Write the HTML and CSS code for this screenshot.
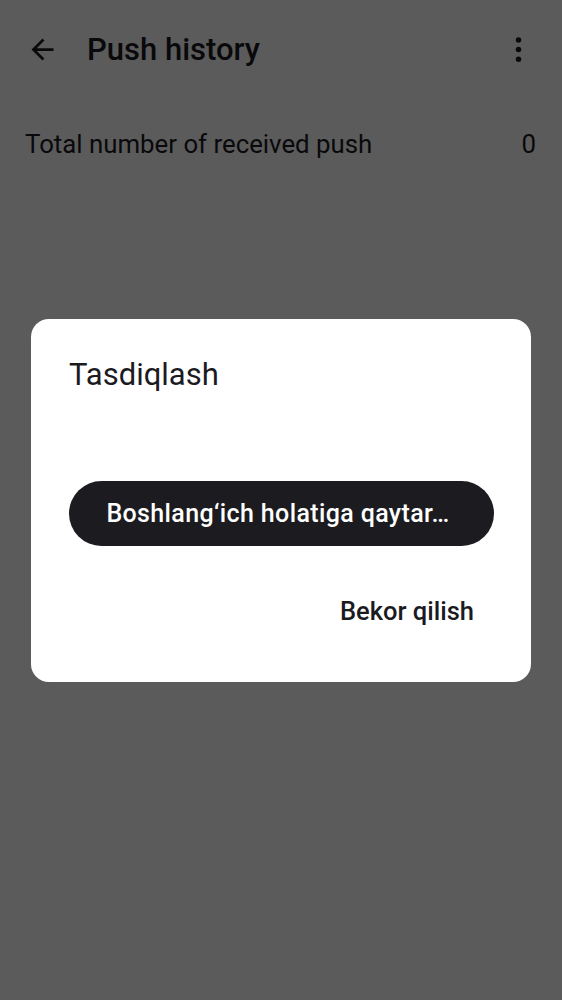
FILE: index.html
```html
<!DOCTYPE html>
<html>
<head>
<meta charset="utf-8">
<link rel="stylesheet" href="styles.css">
</head>
<body>
<div class="app">
  <header class="toolbar">
    <span class="nav-icon">
      <svg width="33" height="33" viewBox="0 0 24 24"><path d="M20 11H7.83l5.59-5.59L12 4l-8 8 8 8 1.41-1.41L7.83 13H20v-2z" fill="currentColor"/></svg>
    </span>
    <h1 class="title">Push history</h1>
    <span class="menu-icon">
      <svg width="33" height="33" viewBox="0 0 24 24"><circle cx="12" cy="5" r="2" fill="currentColor"/><circle cx="12" cy="12" r="2" fill="currentColor"/><circle cx="12" cy="19" r="2" fill="currentColor"/></svg>
    </span>
  </header>
  <div class="row">
    <span class="row-label">Total number of received push</span>
    <span class="row-value">0</span>
  </div>
</div>
<div class="scrim">
  <div class="dialog">
    <h2 class="dialog-title">Tasdiqlash</h2>
    <button class="primary-btn"><span class="btn-label">Boshlang‘ich holatiga qaytar…</span></button>
    <div class="actions">
      <button class="text-btn">Bekor qilish</button>
    </div>
  </div>
</div>
</body>
</html>
```

FILE: styles.css
```css
* { box-sizing: border-box; }
html, body { margin: 0; padding: 0; }
body {
  width: 562px;
  height: 1000px;
  background: #fcfcfc;
  font-family: Roboto, "Noto Sans", sans-serif;
  color: #1b1b1f;
  overflow: hidden;
}
.app { height: 1000px; }
.toolbar {
  display: flex;
  align-items: center;
  height: 98px;
  padding: 0 27px 0 26px;
}
.nav-icon { display: flex; width: 33px; height: 33px; margin-right: 28px; }
.title {
  margin: 0;
  flex: 1;
  font-size: 31px;
  font-weight: 500;
  letter-spacing: 0;
}
.menu-icon { display: flex; width: 33px; height: 33px; }
.row {
  display: flex;
  justify-content: space-between;
  align-items: center;
  padding: 0 26px 0 25px;
  height: 92px;
}
.row-label, .row-value { font-size: 25.8px; }
.scrim {
  position: fixed;
  inset: 0;
  background: rgba(0,0,0,0.64);
  display: flex;
  align-items: center;
  justify-content: center;
  padding: 0 31px;
}
.dialog {
  width: 100%;
  background: #fff;
  border-radius: 18px;
  padding: 36px 37px 44px 38px;
  display: flex;
  flex-direction: column;
}
.dialog-title {
  margin: 0 0 86px;
  font-size: 31px;
  font-weight: 400;
  line-height: 40px;
}
.primary-btn {
  height: 65px;
  border: none;
  border-radius: 33px;
  background: #1c1c20;
  color: #fff;
  font-family: inherit;
  font-size: 25px;
  font-weight: 500;
  letter-spacing: 0.37px;
  padding: 0 27px 0 20px;
  display: flex;
  align-items: center;
  justify-content: center;
}
.btn-label { white-space: nowrap; }
.actions {
  display: flex;
  justify-content: flex-end;
  margin-top: 38px;
}
.text-btn {
  height: 54px;
  border: none;
  background: transparent;
  color: #1b1b1f;
  font-family: inherit;
  font-size: 25.5px;
  font-weight: 500;
  padding: 0 20px;
}
```
